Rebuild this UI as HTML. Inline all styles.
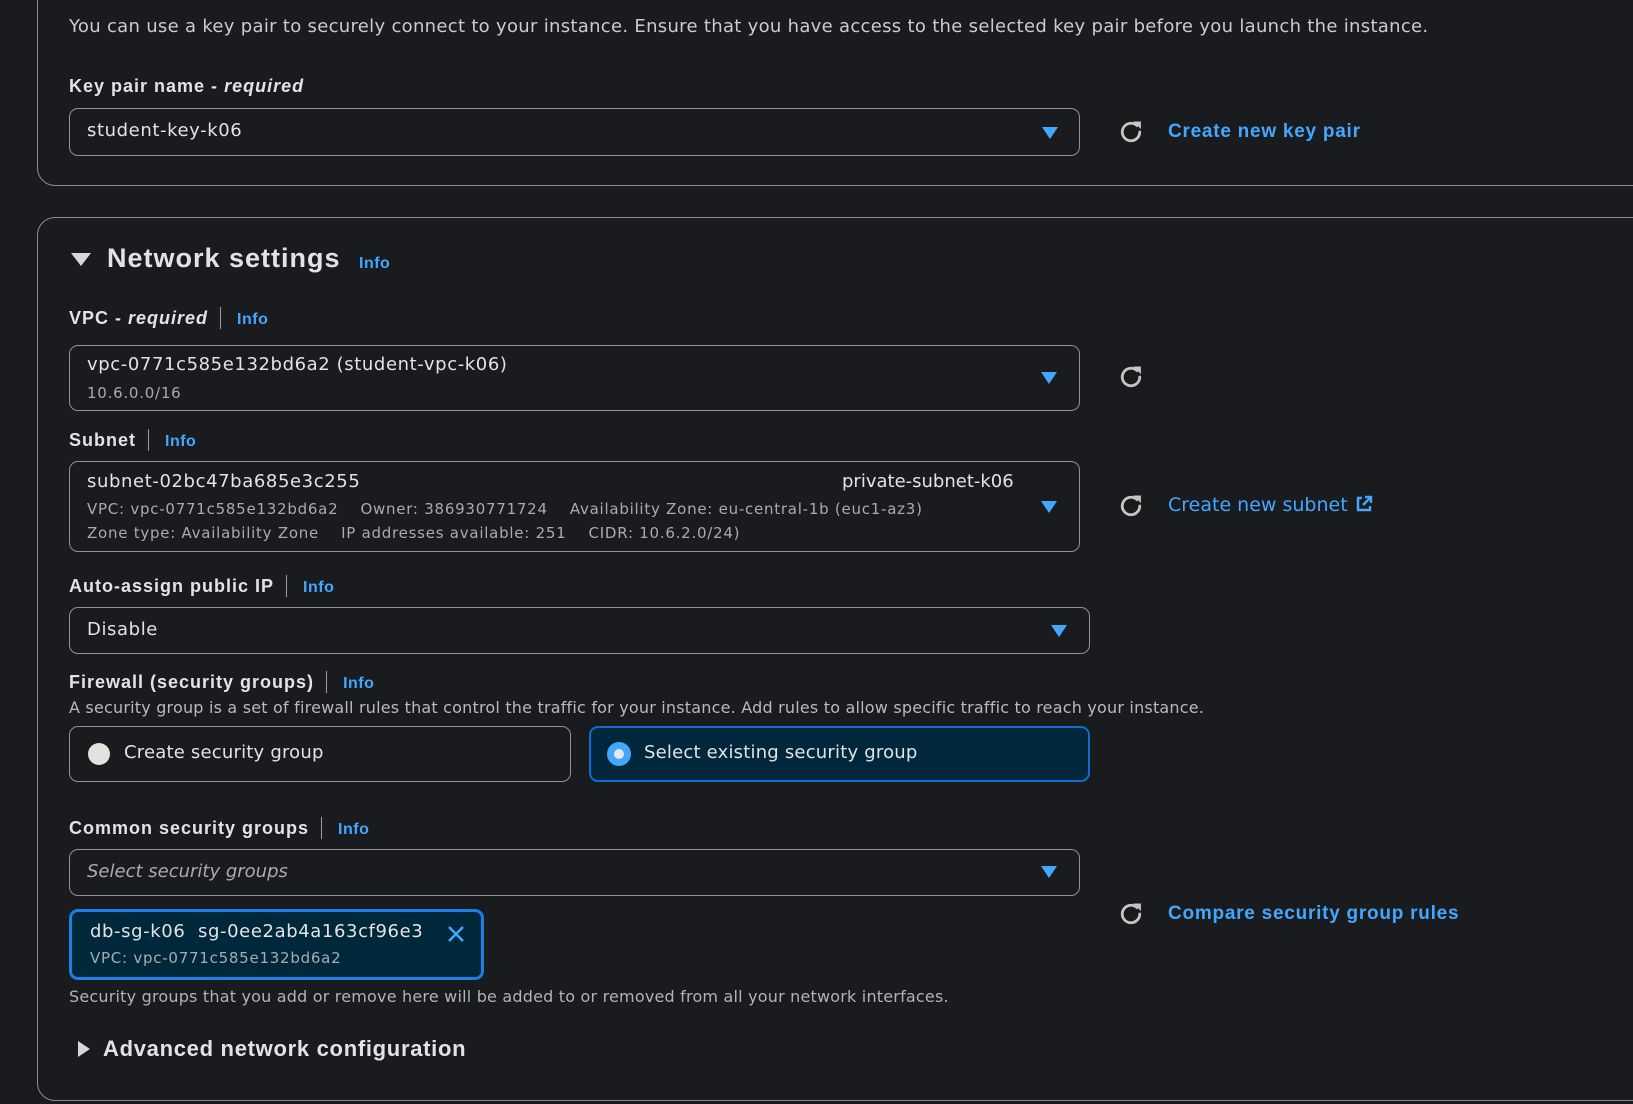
<!DOCTYPE html>
<html><head><meta charset="utf-8"><style>
*{box-sizing:border-box;margin:0;padding:0}
body{width:1633px;height:1104px;background:#1a1b1e;color:#d5d7da;font-family:"DejaVu Sans",sans-serif;position:relative;overflow:hidden}
.a{position:absolute;white-space:nowrap}
.card{position:absolute;border:1px solid #8a8d91;border-radius:18px;}
.box{position:absolute;border:1px solid #8f9297;border-radius:9px;}
.lbl{font-family:"Liberation Sans",sans-serif;font-weight:bold;font-size:18px;color:#e2e3e5;letter-spacing:1px}
.lbl i{font-style:italic}
.sep{display:inline-block;width:1px;height:22px;background:#9a9ca0;vertical-align:-5px;margin:0 16px 0 12px}
.info{font-family:"Liberation Sans",sans-serif;color:#42a8ff;font-weight:bold;font-size:16px;letter-spacing:0.5px}
.caret{position:absolute;width:0;height:0;border-left:8px solid transparent;border-right:8px solid transparent;border-top:12px solid #42a8ff}
.ref{position:absolute;width:28px;height:28px}
.link{font-family:"Liberation Sans",sans-serif;color:#42a8ff;font-weight:bold;font-size:19px;letter-spacing:0.75px}
.v{font-size:18px;color:#e2e3e5;letter-spacing:0.6px}
.s{font-size:15px;color:#a8abb0;letter-spacing:0.75px}
</style></head><body>
<div class="card" style="left:37px;top:-30px;width:1640px;height:216px"></div>
<div class="a" style="left:69px;top:16px;font-size:18px;color:#c9ccd0;letter-spacing:0.3px">You can use a key pair to securely connect to your instance. Ensure that you have access to the selected key pair before you launch the instance.</div>
<div class="a lbl" style="left:69px;top:76px">Key pair name - <i>required</i></div>
<div class="box" style="left:69px;top:108px;width:1011px;height:48px"></div>
<div class="a v" style="left:87px;top:120px">student-key-k06</div>
<div class="caret" style="left:1042px;top:127px"></div>

<svg class="ref" style="left:1117px;top:118px" viewBox="0 0 24 24"><path d="M19.5 12a7.5 7.5 0 1 1-2.4-5.5" fill="none" stroke="#c8c5c0" stroke-width="2.4" stroke-linecap="round"/><path d="M14 3h6.5v6.5z" fill="#c8c5c0"/></svg>
<div class="a link" style="left:1168px;top:121px">Create new key pair</div>

<div class="card" style="left:37px;top:217px;width:1640px;height:884px"></div>
<div class="a" style="left:71px;top:253px;width:0;height:0;border-left:10px solid transparent;border-right:10px solid transparent;border-top:13px solid #d5d7da"></div>
<div class="a" style="left:107px;top:243px;font-family:'Liberation Sans',sans-serif;font-size:27px;font-weight:bold;color:#e2e3e5;letter-spacing:1px">Network settings</div>
<div class="a info" style="left:359px;top:255px">Info</div>

<div class="a lbl" style="left:69px;top:307px">VPC - <i>required</i><span class="sep"></span><span class="info">Info</span></div>
<div class="box" style="left:69px;top:345px;width:1011px;height:66px"></div>
<div class="a v" style="left:87px;top:354px">vpc-0771c585e132bd6a2 (student-vpc-k06)</div>
<div class="a s" style="left:87px;top:384px">10.6.0.0/16</div>
<div class="caret" style="left:1041px;top:372px"></div>
<svg class="ref" style="left:1117px;top:363px" viewBox="0 0 24 24"><path d="M19.5 12a7.5 7.5 0 1 1-2.4-5.5" fill="none" stroke="#c8c5c0" stroke-width="2.4" stroke-linecap="round"/><path d="M14 3h6.5v6.5z" fill="#c8c5c0"/></svg>

<div class="a lbl" style="left:69px;top:429px">Subnet<span class="sep"></span><span class="info">Info</span></div>
<div class="box" style="left:69px;top:461px;width:1011px;height:91px"></div>
<div class="a v" style="left:87px;top:471px">subnet-02bc47ba685e3c255</div>
<div class="a v" style="left:842px;top:471px;letter-spacing:0">private-subnet-k06</div>
<div class="a s" style="left:87px;top:500px">VPC: vpc-0771c585e132bd6a2&nbsp;&nbsp;&nbsp;&nbsp;Owner: 386930771724&nbsp;&nbsp;&nbsp;&nbsp;Availability Zone: eu-central-1b (euc1-az3)</div>
<div class="a s" style="left:87px;top:524px">Zone type: Availability Zone&nbsp;&nbsp;&nbsp;&nbsp;IP addresses available: 251&nbsp;&nbsp;&nbsp;&nbsp;CIDR: 10.6.2.0/24)</div>
<div class="caret" style="left:1041px;top:501px"></div>
<svg class="ref" style="left:1117px;top:492px" viewBox="0 0 24 24"><path d="M19.5 12a7.5 7.5 0 1 1-2.4-5.5" fill="none" stroke="#c8c5c0" stroke-width="2.4" stroke-linecap="round"/><path d="M14 3h6.5v6.5z" fill="#c8c5c0"/></svg>
<div class="a" style="left:1168px;top:494px;font-size:19px;color:#42a8ff">Create new subnet <svg width="20" height="20" viewBox="0 0 20 20" style="vertical-align:-3px;margin-left:0"><path d="M8 4H4v12h12v-4" fill="none" stroke="#42a8ff" stroke-width="2.4"/><path d="M11 3h6v6M17 3l-8 8" fill="none" stroke="#42a8ff" stroke-width="2.4"/></svg></div>

<div class="a lbl" style="left:69px;top:575px">Auto-assign public IP<span class="sep"></span><span class="info">Info</span></div>
<div class="box" style="left:69px;top:607px;width:1021px;height:47px"></div>
<div class="a v" style="left:87px;top:619px">Disable</div>
<div class="caret" style="left:1051px;top:625px"></div>

<div class="a lbl" style="left:69px;top:671px">Firewall (security groups)<span class="sep"></span><span class="info">Info</span></div>
<div class="a" style="left:69px;top:698px;font-size:16px;color:#b7babe;letter-spacing:0.2px">A security group is a set of firewall rules that control the traffic for your instance. Add rules to allow specific traffic to reach your instance.</div>
<div class="box" style="left:69px;top:726px;width:502px;height:56px"></div>
<div class="a" style="left:88px;top:743px;width:22px;height:22px;border-radius:50%;background:#e4e2de"></div>
<div class="a v" style="left:124px;top:742px;letter-spacing:0.2px">Create security group</div>
<div class="box" style="left:589px;top:726px;width:501px;height:56px;border:2px solid #0a6fd0;background:#00273b"></div>
<div class="a" style="left:607px;top:742px;width:24px;height:24px;border-radius:50%;background:#42a8ff"></div>
<div class="a" style="left:614px;top:749px;width:10px;height:10px;border-radius:50%;background:#e8e8e8"></div>
<div class="a v" style="left:644px;top:742px;letter-spacing:0.2px">Select existing security group</div>

<div class="a lbl" style="left:69px;top:817px">Common security groups<span class="sep"></span><span class="info">Info</span></div>
<div class="box" style="left:69px;top:849px;width:1011px;height:47px"></div>
<div class="a" style="left:87px;top:861px;font-size:18px;font-style:italic;color:#a8abb0">Select security groups</div>
<div class="caret" style="left:1041px;top:866px"></div>
<svg class="ref" style="left:1117px;top:900px" viewBox="0 0 24 24"><path d="M19.5 12a7.5 7.5 0 1 1-2.4-5.5" fill="none" stroke="#c8c5c0" stroke-width="2.4" stroke-linecap="round"/><path d="M14 3h6.5v6.5z" fill="#c8c5c0"/></svg>
<div class="a link" style="left:1168px;top:903px">Compare security group rules</div>

<div class="box" style="left:69px;top:909px;width:415px;height:71px;border:3px solid #1a7fe6;background:#00283b"></div>
<div class="a v" style="left:90px;top:921px">db-sg-k06&nbsp;&nbsp;sg-0ee2ab4a163cf96e3</div>
<svg class="a" style="left:446px;top:924px" width="20" height="20" viewBox="0 0 20 20"><path d="M3 3l14 14M17 3L3 17" stroke="#42a8ff" stroke-width="2.5"/></svg>
<div class="a s" style="left:90px;top:949px">VPC: vpc-0771c585e132bd6a2</div>
<div class="a" style="left:69px;top:987px;font-size:16px;color:#b0b3b7;letter-spacing:0.2px">Security groups that you add or remove here will be added to or removed from all your network interfaces.</div>

<div class="a" style="left:78px;top:1041px;width:0;height:0;border-top:8px solid transparent;border-bottom:8px solid transparent;border-left:12px solid #d5d7da"></div>
<div class="a" style="left:103px;top:1036px;font-family:'Liberation Sans',sans-serif;font-size:22px;font-weight:bold;color:#e2e3e5;letter-spacing:0.7px">Advanced network configuration</div>
</body></html>
